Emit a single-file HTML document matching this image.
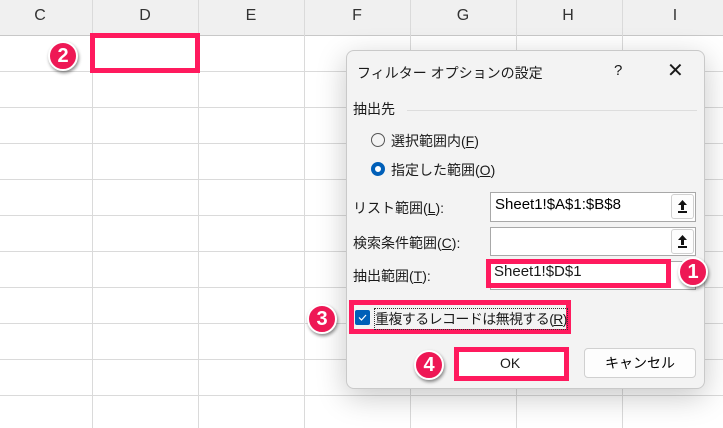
<!DOCTYPE html><html><head><meta charset="utf-8"><style>
body{margin:0;width:723px;height:428px;overflow:hidden;background:#fff;position:relative;font-family:"Liberation Sans","Noto Sans CJK JP",sans-serif;}
.a{position:absolute}
.hdr{left:0;top:0;width:723px;height:35px;background:#f0f0f0;border-bottom:1px solid #c8c8c8}
.vl{position:absolute;top:0;width:1px;height:428px;background:#dadada}
.hl{position:absolute;left:0;width:723px;height:1px;background:#dadada}
.ch{position:absolute;top:7px;font-size:16px;color:#333;width:20px;text-align:center}
.red{position:absolute;border:5px solid #ff1a5e;box-sizing:border-box}
.badge{position:absolute;width:26px;height:26px;border-radius:50%;background:#ee1855;border:2px solid #fff;box-shadow:1px 2px 3px rgba(0,0,0,.45);color:#fff;font-weight:bold;font-size:20px;text-align:center;line-height:26px}
.dlg{left:346px;top:50px;width:359px;height:339px;background:#f3f3f3;border:1px solid #c9c9c9;border-radius:8px;box-shadow:0 8px 30px rgba(0,0,0,.22);box-sizing:border-box}
.t{position:absolute;font-size:14px;color:#1a1a1a;white-space:nowrap}
.inp{position:absolute;background:#fff;border:1px solid #a8a8a8;box-sizing:border-box;font-size:15px;padding:3px 0 0 4px}
.ib{position:absolute;right:1px;top:1px;width:23px;height:25px;background:#fdfdfd;border:1px solid #d0d0d0;border-radius:3px;box-sizing:border-box}
.radio{position:absolute;width:14px;height:14px;border-radius:50%;box-sizing:border-box}
u{text-decoration:underline}
</style></head><body>
<div class="a hdr"></div>
<div class="vl" style="left:92px"></div><div class="vl" style="left:198px"></div><div class="vl" style="left:304px"></div><div class="vl" style="left:410px"></div><div class="vl" style="left:516px"></div><div class="vl" style="left:622px"></div>
<div class="hl" style="top:71px"></div><div class="hl" style="top:107px"></div><div class="hl" style="top:143px"></div><div class="hl" style="top:179px"></div><div class="hl" style="top:215px"></div><div class="hl" style="top:251px"></div><div class="hl" style="top:287px"></div><div class="hl" style="top:323px"></div><div class="hl" style="top:359px"></div><div class="hl" style="top:395px"></div>
<div class="ch" style="left:30px">C</div><div class="ch" style="left:135px">D</div><div class="ch" style="left:241px">E</div><div class="ch" style="left:347px">F</div><div class="ch" style="left:453px">G</div><div class="ch" style="left:558px">H</div><div class="ch" style="left:665px">I</div>
<div class="red" style="left:90px;top:33px;width:110px;height:40px"></div>
<div class="badge" style="left:48px;top:41px">2</div>
<div class="a dlg">
<div class="t" style="left:10px;top:12px">フィルター オプションの設定</div>
<div class="t" style="left:267px;top:11px;font-size:15px">?</div>
<div class="t" style="left:320px;top:7px;font-size:20px;font-weight:300">✕</div>
<div class="t" style="left:6px;top:48px;font-size:14px">抽出先</div>
<div class="a" style="left:60px;top:59px;width:290px;height:1px;background:#ddd"></div>
<div class="radio" style="left:24px;top:82px;border:1px solid #555"></div>
<div class="t" style="left:44px;top:80px;font-size:14px">選択範囲内(<u>F</u>)</div>
<div class="radio" style="left:24px;top:111px;border:4px solid #005fb8;background:#fff"></div>
<div class="t" style="left:44px;top:109px;font-size:14px">指定した範囲(<u>O</u>)</div>
<div class="t" style="left:6px;top:147px;font-size:14px">リスト範囲(<u>L</u>):</div>
<div class="t" style="left:6px;top:182px;font-size:14px">検索条件範囲(<u>C</u>):</div>
<div class="t" style="left:6px;top:215px;font-size:14px">抽出範囲(<u>T</u>):</div>
<div class="inp" style="left:143px;top:141px;width:206px;height:30px">Sheet1!$A$1:$B$8<div class="ib"><svg width="21" height="23"><path d="M10.5 5 L15 10 L12 10 L12 15 L9 15 L9 10 L6 10 Z" fill="#111"/><rect x="6" y="16" width="9" height="2" fill="#111"/></svg></div></div>
<div class="inp" style="left:143px;top:176px;width:206px;height:29px"><div class="ib"><svg width="21" height="23"><path d="M10.5 5 L15 10 L12 10 L12 15 L9 15 L9 10 L6 10 Z" fill="#111"/><rect x="6" y="16" width="9" height="2" fill="#111"/></svg></div></div>
<div class="inp" style="left:143px;top:210px;width:206px;height:29px"></div>
<div class="a" style="left:237px;top:297px;width:112px;height:30px;background:#fdfdfd;border:1px solid #d0d0d0;border-radius:4px;box-sizing:border-box;text-align:center;font-size:14px;line-height:28px">キャンセル</div>
</div>
<div class="red" style="left:486px;top:259px;width:185px;height:29px;background:#fff"></div>
<div class="t" style="left:494px;top:263px;font-size:15px">Sheet1!$D$1</div>
<div class="badge" style="left:678px;top:257px">1</div>
<div class="red" style="left:349px;top:300px;width:222px;height:34px"></div>
<div class="a" style="left:355px;top:310px;width:15px;height:15px;background:#005fb8;border-radius:2px"><svg width="15" height="15"><path d="M4 7.5 L6.5 10 L11 5" stroke="#fff" stroke-width="1.2" fill="none"/></svg></div>
<div class="t" style="left:375px;top:309px;font-size:14px;letter-spacing:-0.6px;outline:1px dotted #333">重複するレコードは無視する(<u>R</u>)</div>
<div class="badge" style="left:307px;top:304px">3</div>
<div class="red" style="left:454px;top:347px;width:115px;height:34px;background:#fff"></div>
<div class="t" style="left:500px;top:355px;font-size:14px">OK</div>
<div class="badge" style="left:414px;top:350px">4</div>
</body></html>
